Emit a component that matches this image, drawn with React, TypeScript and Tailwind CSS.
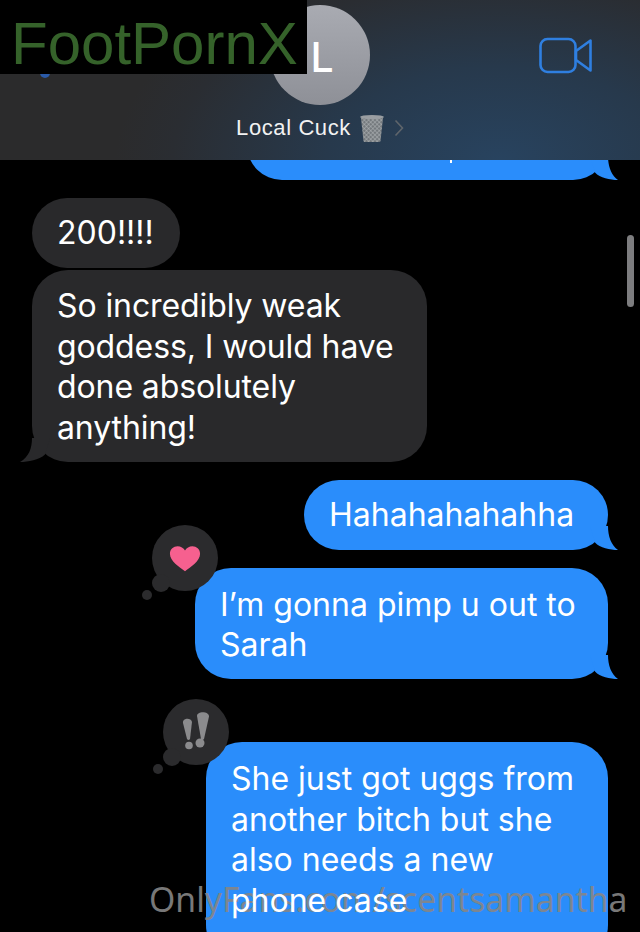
import React from "react";

function RightTail() {
  return (
    <svg className="absolute right-[-12px] bottom-0 w-[30px] h-[24px]" viewBox="0 0 30 24">
      <path d="M0 0 H18 C18 10 21 19 28 24 C20 24 10 22 5 16.5 Z" fill="#2a8dfb" />
    </svg>
  );
}

function LeftTail() {
  return (
    <svg className="absolute left-[-12px] bottom-0 w-[30px] h-[24px]" viewBox="0 0 30 24">
      <path d="M30 0 H12 C12 10 9 19 0 24 C8 24 19 22 25 16.5 Z" fill="#29292b" />
    </svg>
  );
}

function ThoughtBubble({ children, className }: { children: React.ReactNode; className: string }) {
  return (
    <div className={`absolute w-[66px] h-[66px] rounded-full bg-[#2b2b2d] flex items-center justify-center ${className}`}>
      {children}
      <div className="absolute left-0 bottom-[-1px] w-[18px] h-[18px] rounded-full bg-[#2b2b2d]" />
      <div className="absolute left-[-10px] bottom-[-9px] w-[10px] h-[10px] rounded-full bg-[#2b2b2d]" />
    </div>
  );
}

export default function App() {
  return (
    <div className="relative w-[640px] h-[932px] overflow-hidden bg-black text-white font-['Inter','Liberation_Sans',sans-serif]">
      {/* header */}
      <header className="relative h-[160px] flex flex-col items-center pt-[5px] bg-[#2b2b2c] bg-[radial-gradient(ellipse_60%_130%_at_78%_100%,#28435f_0%,#27394c_45%,#2a2d32_85%,#2b2b2c_100%)]">
        <div className="w-[100px] h-[100px] rounded-full bg-gradient-to-b from-[#a9abb2] to-[#8e9097] flex items-center justify-center">
          <span className="text-[41px] leading-none font-medium pt-[4px] pl-[4px]">L</span>
        </div>
        <div className="mt-[8px] flex items-center">
          <span className="text-[22px] leading-[28px] text-[#f2f2f2] font-['Liberation_Sans',sans-serif] tracking-[0.6px]">Local Cuck</span>
          <svg className="ml-[7px] w-[28px] h-[30px]" viewBox="0 0 28 30">
            <defs>
              <pattern id="mesh" width="3" height="3" patternUnits="userSpaceOnUse" patternTransform="rotate(45)">
                <rect width="3" height="3" fill="#74797d" />
                <path d="M0 0H3M0 0V3" stroke="#b4b8bb" strokeWidth="1" />
              </pattern>
            </defs>
            <path d="M3 5 H25 L22.5 28 Q22.4 29 21 29 H7 Q5.6 29 5.5 28 Z" fill="url(#mesh)" />
            <ellipse cx="14" cy="4" rx="12" ry="2" fill="#9a9ea2" />
          </svg>
          <svg className="ml-[8px] w-[10px] h-[18px]" viewBox="0 0 10 18" fill="none" stroke="#5f656b" strokeWidth="1.6">
            <path d="M1.5 1.5 L8.5 9 L1.5 16.5" />
          </svg>
        </div>
        <svg className="absolute left-[539px] top-[37px] w-[54px] h-[37px]" viewBox="0 0 54 37" fill="none" stroke="#2f7fe0" strokeWidth="2.6" strokeLinejoin="round">
          <rect x="1.5" y="2" width="35" height="33" rx="7" />
          <path d="M37 14 L51.5 3.5 V33.5 L37 23 Z" />
        </svg>
      </header>

      {/* messages */}
      <main className="flex flex-col text-[32px] leading-[40.5px]">
        <div className="h-[20px] overflow-hidden flex justify-end items-end pr-[32px]">
          <div className="relative w-[361px] h-[70px] shrink-0 rounded-[35px] bg-[#2a8dfb]">
            <div className="absolute left-[203px] top-[50px] w-[2px] h-[3px] bg-white" />
            <RightTail />
          </div>
        </div>

        <div className="mt-[18px] ml-[32px] w-fit rounded-[35px] bg-[#29292b] pl-[25px] pr-[26px] py-[15px] leading-[40px]">200!!!!</div>
        <div className="relative mt-[2px] ml-[32px] w-[395px] rounded-[36px] bg-[#29292b] pl-[25px] pr-[10px] pt-[16px] pb-[14px] tracking-[-0.1px]">
          So incredibly weak goddess, I would have done absolutely anything!
          <LeftTail />
        </div>

        <div className="relative mt-[18px] mr-[32px] self-end w-[304px] rounded-[35px] bg-[#2a8dfb] pl-[25px] py-[15px] leading-[40px]">
          Hahahahahahha
          <RightTail />
        </div>

        <div className="relative mt-[18px] mr-[32px] self-end w-[413px] rounded-[36px] bg-[#2a8dfb] pl-[25px] pr-[20px] pt-[17px] pb-[14px] leading-[40px]">
          I’m gonna pimp u out to Sarah
          <RightTail />
          <ThoughtBubble className="left-[-43px] top-[-43px]">
            <svg className="w-[32px] h-[27px]" viewBox="0 0 34 28">
              <path d="M17 27.5 C11 23 1 17 1 9 C1 4 5 1 9 1 C12.5 1 15.5 3 17 5.5 C18.5 3 21.5 1 25 1 C29 1 33 4 33 9 C33 17 23 23 17 27.5 Z" fill="#f6608f" />
            </svg>
          </ThoughtBubble>
        </div>

        <div className="relative mt-[63px] mr-[32px] self-end w-[402px] rounded-[36px] bg-[#2a8dfb] pl-[25px] pr-[20px] pt-[17px] pb-[40px]">
          She just got uggs from another bitch but she also needs a new <span className="relative z-10">phone case</span>
          <ThoughtBubble className="left-[-43px] top-[-43px]">
            <svg className="w-[28px] h-[40px]" viewBox="0 0 28 40" fill="#8b8b8d">
              <path d="M1 11 C0 6 9 5 10 10 L8 27 Q6.5 29 5 27 Z" />
              <circle cx="7" cy="33.5" r="3.8" />
              <path d="M15 4 C15 -1 27 -1 27 4.5 L22 27 Q20 29 19 27 Z" />
              <circle cx="18" cy="31" r="4.5" />
            </svg>
          </ThoughtBubble>
        </div>
      </main>

      {/* scroll indicator */}
      <div className="absolute left-[627px] top-[235px] w-[7px] h-[72px] rounded-full bg-[#7d7d7f]" />

      {/* overlaid watermarks */}
      <div className="absolute left-[40px] top-[72px] w-[10px] h-[6px] rounded-b-full bg-[#2a5aa8]" />
      <div className="absolute left-0 top-0 w-[307px] h-[74px] bg-black pl-[11px] text-[60px] leading-[87px] text-[#35622a] font-['Liberation_Sans',sans-serif]">
        FootPornX
      </div>
      <div className="absolute z-[5] left-[149px] top-[879px] text-[33.7px] leading-[40px] text-[#868686] opacity-90 font-['Noto_Sans',sans-serif] whitespace-nowrap">
        OnlyFans.com/scentsamantha
      </div>
    </div>
  );
}
